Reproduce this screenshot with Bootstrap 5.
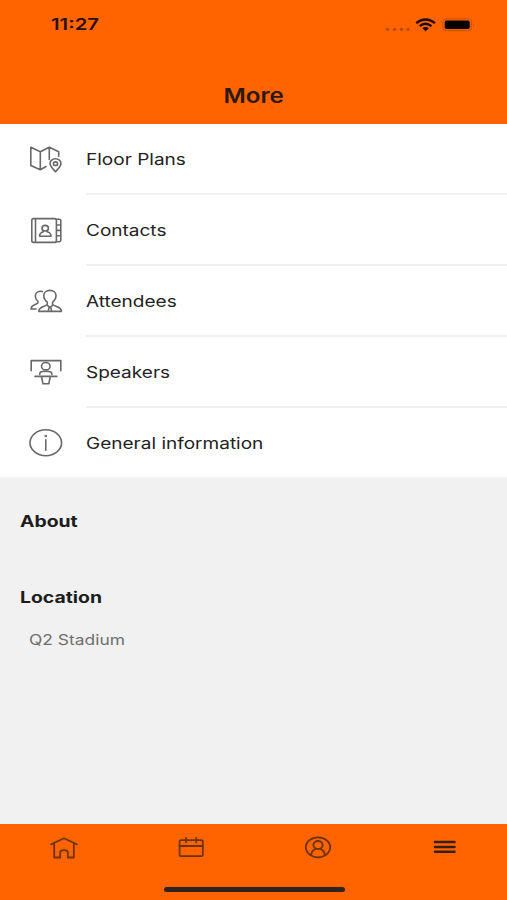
<!DOCTYPE html>
<html lang="en">
<head>
<meta charset="utf-8">
<meta name="viewport" content="width=device-width, initial-scale=1">
<title>More</title>
<link href="https://cdn.jsdelivr.net/npm/bootstrap@5.3.0/dist/css/bootstrap.min.css" rel="stylesheet">
<style>
  body { font-family: Inter, "Liberation Sans", sans-serif; background: #f1f1f1; color: #222; }
  .screen { height: 900px; }
  .brand-bg { background: #ff6400; }
  .top-area { height: 124px; }
  .status { height: 49px; padding: 0 32px 0 51px; }
  .wide { display: inline-block; white-space: nowrap; transform-origin: left center; line-height: 24px; }
  .clock { font-size: 15.5px; font-weight: 600; color: #2a1000; transform: scaleX(1.31); padding-top: 1px; }
  .title { font-size: 20.5px; font-weight: 600; color: #2b1a0c; transform: scaleX(1.18); transform-origin: center; margin: 0 0 16px; }
  .menu-row { height: 71px; }
  .menu-row:last-child { height: 69px; }
  .menu-icon { width: 86px; padding-left: 28px; color: #686868; }
  .menu-text { border-bottom: 2px solid #f0f0f0; padding-top: 2px; }
  .menu-row:last-child .menu-text { border-bottom: 0; }
  .label { font-size: 15.7px; transform: scaleX(1.212); }
  .info { padding: 33px 20px 0; }
  .head { font-size: 15.7px; font-weight: 700; color: #1c1d20; transform: scaleX(1.235); }
  .place { font-size: 14.5px; color: #6f6f6f; transform: scaleX(1.2); margin: 18px 0 0 9px; }
  .tabs { height: 76px; color: #6e3205; }
  .tab { width: 126.75px; padding: 9px 0 0 2px; }
  .tab-active { color: #38200f; }
  .home-line { width: 181px; height: 5px; border-radius: 3px; background: #2c241d; margin: 0 0 8px 1px; }
  svg { display: block; fill: none; stroke: currentColor; stroke-linecap: round; stroke-linejoin: round; }
</style>
<script src="https://cdn.jsdelivr.net/npm/bootstrap@5.3.0/dist/js/bootstrap.bundle.min.js"></script>
</head>
<body>
<div class="screen d-flex flex-column overflow-hidden">
  <header class="top-area brand-bg d-flex flex-column justify-content-between">
    <div class="status d-flex align-items-center justify-content-between">
      <span class="wide clock">11:27</span>
      <svg width="92" height="20" viewBox="0 0 92 20">
        <g fill="#b54a08" stroke="none"><circle cx="4.5" cy="14.3" r="1.6"/><circle cx="11.5" cy="14.3" r="1.6"/><circle cx="18.5" cy="14.3" r="1.6"/><circle cx="25" cy="14.3" r="1.6"/></g>
        <g stroke="#1c0900" stroke-width="2.3" stroke-linecap="butt"><path d="M33.2 8.2Q42.5 .8 52 8.2"/><path d="M36.7 11.2Q42.5 6.4 48.5 11.2"/></g>
        <path d="M39.3 13.2Q42.6 10.8 45.9 13.2L42.6 16.2Z" fill="#1c0900" stroke="none"/>
        <rect x="59.9" y="3.9" width="28.6" height="11.8" rx="3.2" stroke="#c65207" stroke-width="1"/>
        <rect x="61.7" y="5.5" width="25" height="8.6" rx="1.8" fill="#080200" stroke="none"/>
        <path d="M90 8.2Q91.8 9.8 90 11.4Z" fill="#b84905" stroke="none"/>
      </svg>
    </div>
    <div class="text-center"><h1 class="wide title">More</h1></div>
  </header>

  <main class="flex-grow-1">
    <div class="bg-white">
      <div class="menu-row d-flex">
        <div class="menu-icon d-flex align-items-center">
          <svg width="36" height="30" viewBox="0 0 36 30" stroke-width="1.6">
            <path d="M18 21.5L12.3 24.7L2.8 20.5V2.3L12.3 6.7L21.3 2.3L30.7 6.8V11.2M12.3 6.7V24.7M21.3 2.3V14.5"/>
            <path d="M27.5 26.7C25 23.8 22 21.1 22 18.4A5.5 4.7 0 0 1 33 18.4C33 21.1 30 23.8 27.5 26.7Z"/><ellipse cx="27.5" cy="18.7" rx="2.1" ry="1.8"/>
          </svg>
        </div>
        <div class="menu-text flex-grow-1 d-flex align-items-center"><span class="wide label">Floor Plans</span></div>
      </div>
      <div class="menu-row d-flex">
        <div class="menu-icon d-flex align-items-center">
          <svg width="36" height="30" viewBox="0 0 36 30" stroke-width="1.6">
            <path d="M5.5 2.6H26.5Q28.4 2.6 28.4 4.6V24.4Q28.4 26.4 26.5 26.4H5.5Q3.8 26.4 3.8 24.6V4.4Q3.8 2.6 5.5 2.6ZM7.5 2.6V26.4"/>
            <path d="M28 3.2H31.3Q32.8 3.2 32.8 4.8V24.1Q32.8 25.7 31.3 25.7H28M28.7 9H32.8M28.7 14.4H32.8M28.7 19.8H32.8"/>
            <ellipse cx="17.2" cy="12.2" rx="3.2" ry="2.8"/><path d="M15.4 14.6V15.8C12.8 16.5 11.6 17.4 11.6 20.2H23C23 17.4 21.6 16.5 19.1 15.8V14.6"/>
          </svg>
        </div>
        <div class="menu-text flex-grow-1 d-flex align-items-center"><span class="wide label">Contacts</span></div>
      </div>
      <div class="menu-row d-flex">
        <div class="menu-icon d-flex align-items-center">
          <svg width="36" height="30" viewBox="0 0 36 30" stroke-width="1.6">
            <path d="M19.3 15.2C16.7 13.3 15.8 11 15.8 8.6C15.8 5.4 18.5 3.4 21.9 3.4S28 5.4 28 8.6C28 11 27.2 13.3 24.6 15.2V17.4C26 19.7 33.4 19 33.4 24.4H10.8C10.8 19 18 19.7 19.3 17.4Z"/>
            <path d="M19.3 18.4L21.9 20.4L24.6 18.4M21 20.4L20.3 24.2M22.8 20.4L23.6 24.2"/>
            <path d="M14.4 4.6C10.7 3.6 7.3 5.5 7.3 9.1C7.3 11.3 8.1 13 9.9 14.3V15.8C8.7 17.9 3 17.4 3 22H8"/>
          </svg>
        </div>
        <div class="menu-text flex-grow-1 d-flex align-items-center"><span class="wide label">Attendees</span></div>
      </div>
      <div class="menu-row d-flex">
        <div class="menu-icon d-flex align-items-center">
          <svg width="36" height="30" viewBox="0 0 36 30" stroke-width="1.6">
            <path d="M3.2 12.8V2.6H32.8V12.8"/><ellipse cx="17.8" cy="8.2" rx="4.3" ry="3.7"/>
            <path d="M11.7 16.5C11.7 13.6 13.4 13.2 17.8 13.2S23.9 13.6 23.9 16.5"/><path d="M7 18.4H28.8M13.5 18.8L15 25.8H20.8L22.2 18.8"/>
          </svg>
        </div>
        <div class="menu-text flex-grow-1 d-flex align-items-center"><span class="wide label">Speakers</span></div>
      </div>
      <div class="menu-row d-flex">
        <div class="menu-icon d-flex align-items-center">
          <svg width="36" height="30" viewBox="0 0 36 30" stroke-width="1.6">
            <ellipse cx="17.8" cy="14.8" rx="15.8" ry="13"/><path d="M17.8 11.8V22.3"/><circle cx="17.8" cy="8" r=".5"/>
          </svg>
        </div>
        <div class="menu-text flex-grow-1 d-flex align-items-center"><span class="wide label">General information</span></div>
      </div>
    </div>

    <section class="info d-flex flex-column align-items-start">
      <h2 class="wide head mb-0">About</h2>
      <h2 class="wide head mb-0 mt-5 pt-1">Location</h2>
      <p class="wide place">Q2 Stadium</p>
    </section>
  </main>

  <nav class="tabs brand-bg d-flex flex-column justify-content-between align-items-center">
    <div class="d-flex w-100">
      <div class="tab d-flex justify-content-center">
        <svg width="30" height="28" viewBox="0 0 30 28" stroke-width="1.8"><path d="M2.2 11.3L15 5.2L27.8 11.3M5.2 10V24.5H11.2V19.5Q11.2 17.2 15 17.2T18.8 19.5V24.5H24.8V10"/></svg>
      </div>
      <div class="tab d-flex justify-content-center">
        <svg width="30" height="28" viewBox="0 0 30 28" stroke-width="1.8"><rect x="3.6" y="7.2" width="23.2" height="16" rx="1.4"/><path d="M3.6 13H26.8M10 4.8V9.3M20.2 4.8V9.3"/></svg>
      </div>
      <div class="tab d-flex justify-content-center">
        <svg width="30" height="28" viewBox="0 0 30 28" stroke-width="1.8"><ellipse cx="15" cy="14.3" rx="12.2" ry="10"/><ellipse cx="15" cy="12" rx="4.6" ry="4"/><path d="M8.2 22.3C8.2 18.6 10.8 16.6 13 15.6M21.8 22.3C21.8 18.6 19.2 16.6 17 15.6"/></svg>
      </div>
      <div class="tab tab-active d-flex justify-content-center">
        <svg width="30" height="28" viewBox="0 0 30 28" stroke-width="2.5"><path d="M5 9H24.5M5 14H24.5M5 18.8H24.5"/></svg>
      </div>
    </div>
    <div class="home-line"></div>
  </nav>
</div>
</body>
</html>
